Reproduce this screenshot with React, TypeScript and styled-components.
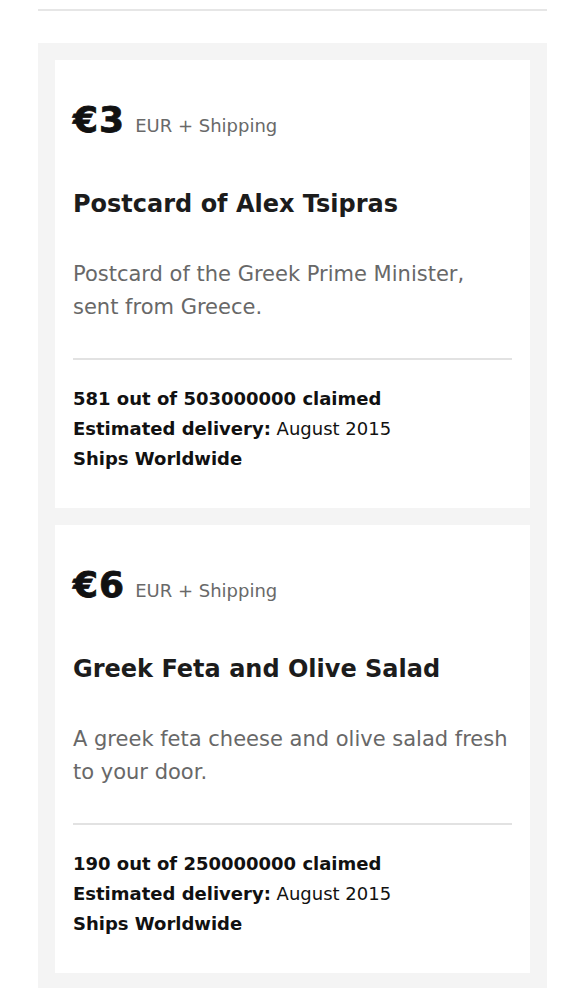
import styled, { createGlobalStyle } from 'styled-components';

interface IReward {
	amount: number;
	title: string;
	body: string;
	claimed: number;
	limit: number;
	delivery: string;
}

const rewards: IReward[] = [
	{
		amount: 3,
		title: 'Postcard of Alex Tsipras',
		body: 'Postcard of the Greek Prime Minister, sent from Greece.',
		claimed: 581,
		limit: 503000000,
		delivery: 'August 2015',
	},
	{
		amount: 6,
		title: 'Greek Feta and Olive Salad',
		body: 'A greek feta cheese and olive salad fresh to your door.',
		claimed: 190,
		limit: 250000000,
		delivery: 'August 2015',
	},
];

function RewardCard({ amount, title, body, claimed, limit, delivery }: IReward) {
	return (
		<Card>
			<PriceRow>
				<Amount>€{amount}</Amount>
				<Unit>EUR + Shipping</Unit>
			</PriceRow>
			<Title>{title}</Title>
			<Description>{body}</Description>
			<Divider />
			<Stats>
				<StatLine>
					<b>
						{claimed} out of {limit} claimed
					</b>
				</StatLine>
				<StatLine>
					<b>Estimated delivery:</b> {delivery}
				</StatLine>
				<StatLine>
					<b>Ships Worldwide</b>
				</StatLine>
			</Stats>
		</Card>
	);
}

export default function App() {
	return (
		<>
			<GlobalStyle />
			<Page>
				<TopRule />
				<Panel>
					{rewards.map((r) => (
						<RewardCard key={r.title} {...r} />
					))}
				</Panel>
			</Page>
		</>
	);
}

const GlobalStyle = createGlobalStyle`
	body {
		margin: 0;
		background: #fff;
		font-family: 'DejaVu Sans', 'Liberation Sans', sans-serif;
		color: #111;
	}
`;

const Page = styled.div`
	width: 509px;
	margin-left: 38px;
	padding-top: 9px;
	display: flex;
	flex-flow: column nowrap;
`;

const TopRule = styled.div`
	height: 2px;
	background: #e6e6e6;
	margin-bottom: 32px;
`;

const Panel = styled.ul`
	list-style: none;
	margin: 0;
	padding: 17px 17px 15px;
	background: #f4f4f4;
	display: flex;
	flex-flow: column nowrap;
	gap: 17px;
`;

const Card = styled.li`
	background: #fff;
	padding: 40px 18px 34px;
	display: flex;
	flex-flow: column nowrap;
`;

const PriceRow = styled.div`
	display: flex;
	align-items: baseline;
	gap: 10px;
	line-height: 40px;
`;

const Amount = styled.span`
	font-size: 36px;
	font-weight: 700;
	letter-spacing: 1px;
	color: #111;
	-webkit-text-stroke: 0.8px #111;
`;

const Unit = styled.span`
	font-size: 18px;
	line-height: 1;
	color: #696969;
`;

const Title = styled.h3`
	margin: 49px 0 0;
	font-size: 24px;
	line-height: 30px;
	font-weight: 700;
	color: #1c1c1c;
`;

const Description = styled.p`
	margin: 39px 0 0;
	font-size: 21px;
	line-height: 33px;
	color: #686868;
`;

const Divider = styled.hr`
	margin: 34px 0 0;
	height: 2px;
	border: none;
	background: #e2e2e2;
`;

const Stats = styled.div`
	margin-top: 24px;
	font-size: 18px;
	line-height: 30px;
	color: #111;
`;

const StatLine = styled.div`
	b {
		font-weight: 700;
	}
`;
